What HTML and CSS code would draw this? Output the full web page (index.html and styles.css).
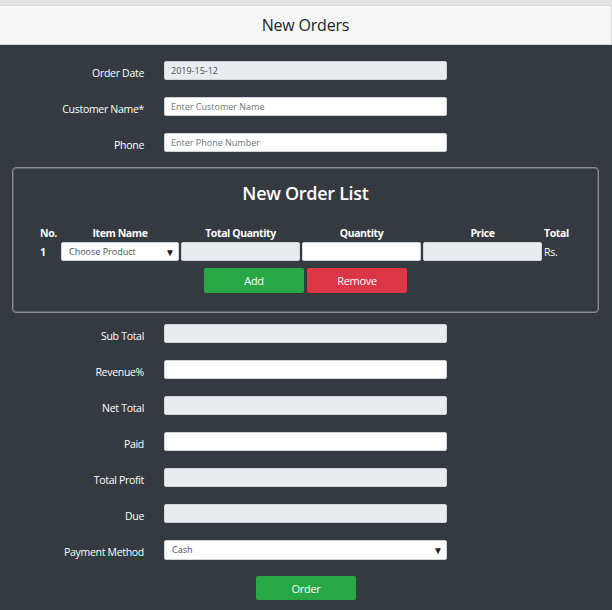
FILE: index.html
```html
<!DOCTYPE html>
<html>
<head>
<meta charset="utf-8">
<link rel="stylesheet" href="styles.css">
</head>
<body>
<div class="top">
  <header class="title-bar"><h1>New Orders</h1></header>
</div>
<main class="main">
  <div class="row"><label>Order Date</label><input class="field ro" value="2019-15-12" readonly></div>
  <div class="row"><label>Customer Name*</label><input class="field" placeholder="Enter Customer Name"></div>
  <div class="row before-card"><label>Phone</label><input class="field" placeholder="Enter Phone Number"></div>

  <section class="card">
    <h2>New Order List</h2>
    <div class="grid">
      <div class="th left">No.</div>
      <div class="th">Item Name</div>
      <div class="th">Total Quantity</div>
      <div class="th">Quantity</div>
      <div class="th">Price</div>
      <div class="th left">Total</div>
      <div class="td">1</div>
      <div class="sel small"><span>Choose Product</span><span class="arrow">▼</span></div>
      <input class="cell ro" readonly>
      <input class="cell">
      <input class="cell ro" readonly>
      <div class="td rs">Rs.</div>
    </div>
    <div class="btns">
      <button class="btn green">Add</button>
      <button class="btn red">Remove</button>
    </div>
  </section>

  <div class="row"><label>Sub Total</label><input class="field ro" readonly></div>
  <div class="row"><label>Revenue%</label><input class="field"></div>
  <div class="row"><label>Net Total</label><input class="field ro" readonly></div>
  <div class="row"><label>Paid</label><input class="field"></div>
  <div class="row"><label>Total Profit</label><input class="field ro" readonly></div>
  <div class="row"><label>Due</label><input class="field ro" readonly></div>
  <div class="row"><label>Payment Method</label><div class="sel wide"><span>Cash</span><span class="arrow">▼</span></div></div>
  <div class="order-wrap"><button class="btn green order">Order</button></div>
</main>
</body>
</html>
```

FILE: styles.css
```css
* { box-sizing: border-box; }
html, body {
  margin: 0;
  padding: 0;
  background: #343a40;
  font-family: "Open Sans", "Noto Sans", sans-serif;
  font-size: 10.5px;
  color: #fff;
  height: 100%;
}
.top {
  background: linear-gradient(#e4e4e4, #f0f0f0);
  padding-top: 5px;
}
.title-bar {
  height: 40px;
  background: #f7f7f7;
  border-top: 1px solid #dcdcdc;
  border-bottom: 1px solid #d5d5d5;
  border-right: 1px solid #dcdcdc;
  display: flex;
  align-items: center;
  justify-content: center;
}
.title-bar h1 {
  margin: 0;
  font-size: 16px;
  font-weight: 500;
  color: #212529;
  letter-spacing: -0.2px;
}
.main {
  padding-top: 16px;
}
.row {
  display: flex;
  align-items: center;
  height: 19px;
  margin-bottom: 17px;
}
.row.before-card { margin-bottom: 15px; }
.row label {
  width: 144px;
  text-align: right;
  margin-right: 20px;
  padding-top: 5px;
  letter-spacing: -0.3px;
}
.field {
  width: 283px;
  height: 19px;
  border: 1px solid #ced4da;
  border-radius: 2px;
  background: #fff;
  padding: 0 6px;
  font-family: inherit;
  font-size: 9px;
  color: #495057;
  outline: none;
}
.field.ro, .cell.ro { background: #e9ecef; }
.field::placeholder { color: #6c757d; }
.card {
  margin: 0 13px 11px 12px;
  height: 146px;
  border: 1px solid #8a8e93;
  box-shadow: inset 0 0 0 1px #5a5f65;
  border-radius: 4px;
  padding: 13px 0 0 27px;
}
.card h2 {
  margin: 0 0 21px -27px;
  text-align: center;
  font-size: 18px;
  line-height: 24px;
  font-weight: 600;
  letter-spacing: -0.3px;
}
.grid {
  display: grid;
  grid-template-columns: 19px 118px 119px 119px 119px 30px;
  column-gap: 2px;
  row-gap: 2px;
  align-items: center;
}
.th {
  font-weight: 700;
  text-align: center;
  line-height: 14px;
  letter-spacing: -0.4px;
}
.th.left, .td { text-align: left; }
.td { font-weight: 700; }
.td.rs { font-weight: 400; letter-spacing: -0.3px; }
.cell {
  height: 19px;
  border: 1px solid #ced4da;
  border-radius: 2px;
  background: #fff;
  outline: none;
  width: 100%;
}
.sel {
  position: relative;
  height: 19px;
  background: #fff;
  border: 1px solid #ced4da;
  border-radius: 2px;
  color: #495057;
  font-size: 9px;
  display: flex;
  align-items: center;
  padding: 0 7px;
}
.sel.wide { width: 283px; height: 20px; }
.sel .arrow {
  position: absolute;
  right: 3px;
  top: 2px;
  font-size: 10px;
  color: #222;
}
.btns {
  display: flex;
  justify-content: center;
  gap: 3px;
  margin: 7px 0 0 -27px;
}
.btn {
  width: 100px;
  height: 25px;
  border: none;
  border-radius: 2px;
  color: #fff;
  font-family: inherit;
  font-size: 11px;
  letter-spacing: -0.3px;
}
.green { background: #28a745; }
.red { background: #dc3545; }
.order-wrap {
  display: flex;
  justify-content: center;
}
.order { height: 24px; }
```
